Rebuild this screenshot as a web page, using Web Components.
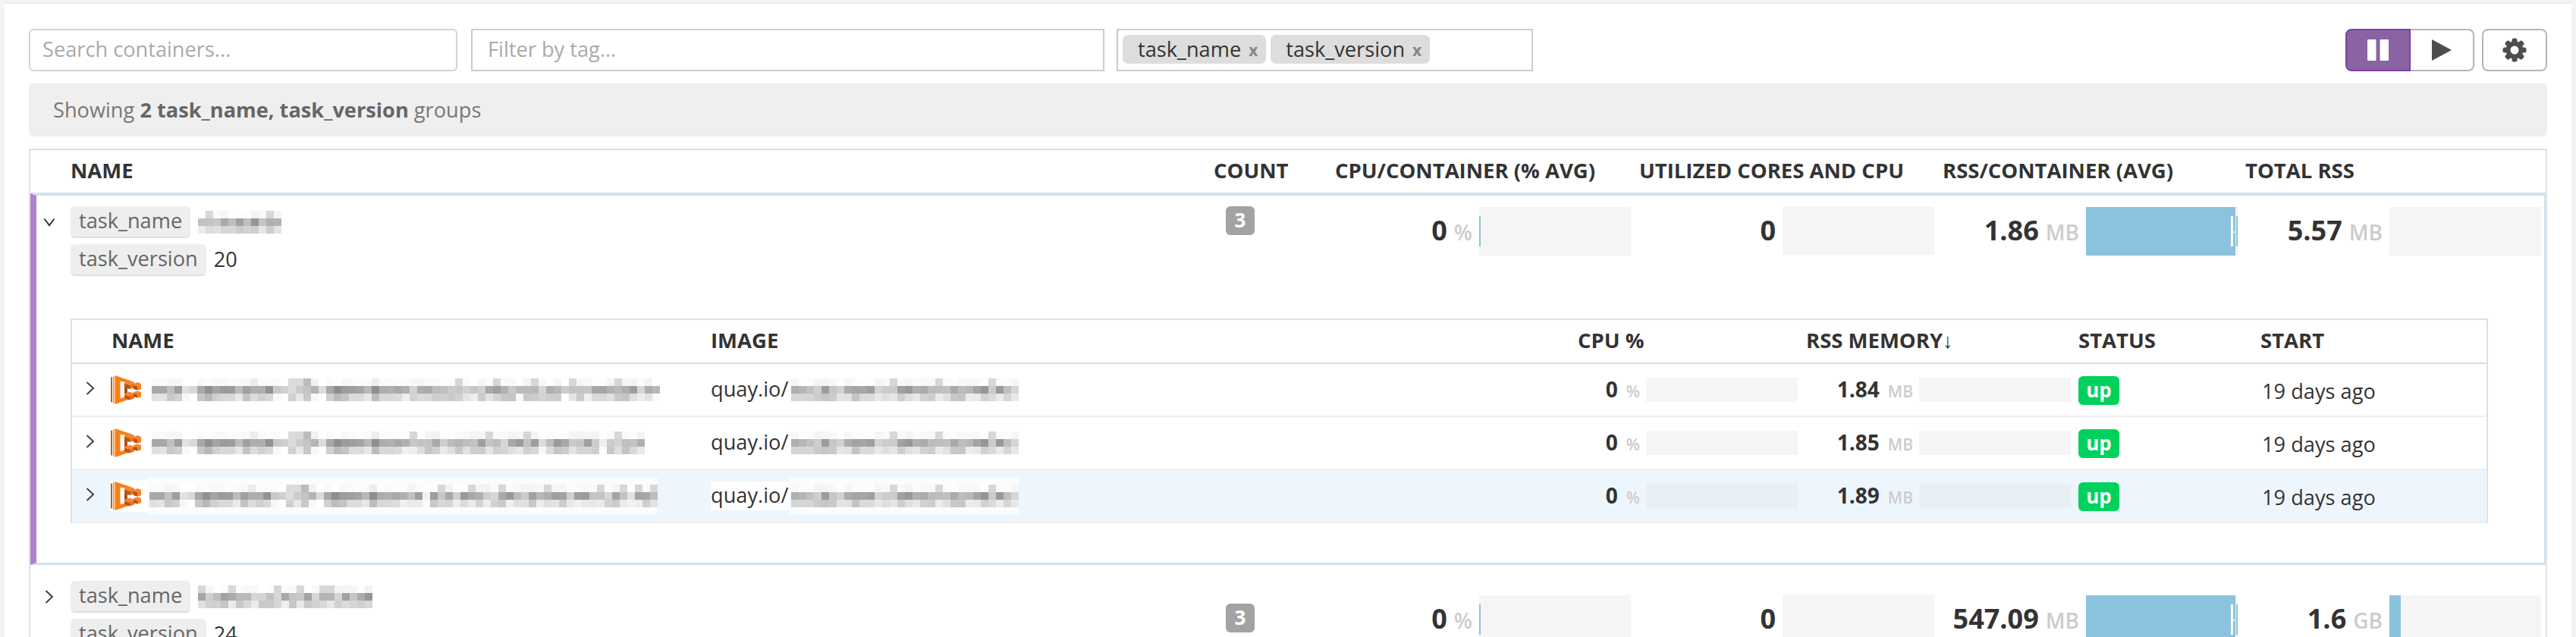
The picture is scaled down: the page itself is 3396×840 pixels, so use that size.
<!DOCTYPE html>
<html lang="en">
<head>
<meta charset="utf-8">
<title>Containers</title>
<style>
html,body{margin:0;padding:0;background:#f4f4f4;}
body{font-family:"Open Sans","Liberation Sans",sans-serif;font-size:27.2px;color:#333;}
</style>
</head>
<body>
<ct-app>
  <ct-toolbar>
    <ct-field style="width:565px" rounded placeholder="Search containers..."></ct-field>
    <ct-field style="width:835px;margin-left:18px;--pad:20px" placeholder="Filter by tag..."></ct-field>
    <ct-tagbox style="margin-left:16px"><ct-pill>task_name</ct-pill><ct-pill>task_version</ct-pill></ct-tagbox>
    <ct-controls></ct-controls>
  </ct-toolbar>
  <ct-summary>Showing <b>2 task_name, task_version</b> groups</ct-summary>
  <ct-table>
    <ct-head></ct-head>
    <ct-group expanded count="3" cpu="0" cores="0" rss="1.86" total="5.57" total-unit="MB" total-fill="0" name-seed="3" name-len="11" version="20">
      <ct-inner>
        <ct-row tail="5"  len="67" image-seed="9" cpu="0" rss="1.84"></ct-row>
        <ct-row tail="17" len="65" image-seed="9" cpu="0" rss="1.85"></ct-row>
        <ct-row tail="31" len="67" image-seed="9" cpu="0" rss="1.89" highlight></ct-row>
      </ct-inner>
    </ct-group>
    <ct-group style="--top:21px" metric-off="18" count-off="30" count="3" cpu="0" cores="0" rss="547.09" total="1.6" total-unit="GB" total-fill="15" name-seed="12" name-len="23" version="24"></ct-group>
  </ct-table>
</ct-app>

<script>
const FONT = '"Open Sans","Liberation Sans",sans-serif';
function el(name, css, html) {
  customElements.define(name, class extends HTMLElement {
    constructor() {
      super();
      this.attachShadow({ mode: 'open' }).innerHTML = '<style>' + css + '</style>' + html;
    }
  });
}
const GRID_OUTER = 'grid-template-columns:1552px 150px 400px 400px 400px 400px 4px;';
const GRID_INNER = 'grid-template-columns:842px 1133px 310px 360px 240px 298px;';

el('ct-app',
  ':host{display:block;margin:4px 6px 0;padding:33px 32px 0;background:#fff;box-sizing:border-box;overflow:hidden;border-top:1px solid #e6e6e6;height:836px;font-family:' + FONT + ';}',
  '<slot></slot>');

el('ct-toolbar', ':host{display:flex;height:56px;}', '<slot></slot>');

customElements.define('ct-field', class extends HTMLElement {
  constructor() {
    super();
    this.attachShadow({ mode: 'open' }).innerHTML = `<style>
      :host{display:flex;align-items:center;box-sizing:border-box;height:56px;border:2px solid #ccc;background:#fff;padding-left:var(--pad,16px);padding-bottom:3px;color:#aaa;font-size:27.2px;}
      :host([rounded]){border-radius:6px;border-color:#d4d4d4;}
    </style><span></span>`;
  }
  connectedCallback() { this.shadowRoot.querySelector('span').textContent = this.getAttribute('placeholder'); }
});

el('ct-tagbox', ':host{display:flex;box-sizing:border-box;width:549px;height:56px;border:2px solid #ccc;padding:6px;gap:6px;background:#fff;}', '<slot></slot>');

el('ct-pill',
  ':host{display:flex;align-items:center;height:38px;box-sizing:border-box;padding:0 11px 2px 20px;background:#ddd;border-radius:7px;color:#333;font-size:27.2px;} i{font-style:normal;font-size:21px;font-weight:700;color:#888;margin-left:10px;padding-top:3px;}',
  '<slot></slot><i>x</i>');

el('ct-controls', `
  :host{display:flex;margin-left:auto;gap:10px;}
  .b{box-sizing:border-box;height:56px;display:flex;align-items:center;justify-content:center;border:2px solid #b5b5b5;background:#fff;}
  .pause{width:86px;background:#8a63a2;border-color:#7d3fa8;border-radius:8px 0 0 8px;}
  .play{width:84px;border-left:0;border-radius:0 8px 8px 0;}
  .gear{width:86px;border-radius:8px;}
  .seg{display:flex;}
  svg{display:block;}
`, `<div class="seg">
  <div class="b pause"><svg width="28" height="28" viewBox="0 0 28 28"><rect x="0" y="0" width="11.500" height="28" rx="1" fill="#fff"/><rect x="16.500" y="0" width="11.500" height="28" rx="1" fill="#fff"/></svg></div>
  <div class="b play"><svg width="26" height="28" viewBox="0 0 26 28"><path d="M0 0 L26 14 L0 28Z" fill="#4d4d4d"/></svg></div>
</div>
<div class="b gear"><svg width="32" height="32" viewBox="-16 -16 32 32"><g fill="#4d4d4d"><circle r="11.500"/>
  <rect x="-3.500" y="-15.500" width="7" height="31" rx="2.500"/>
  <rect x="-3.500" y="-15.500" width="7" height="31" rx="2.500" transform="rotate(45)"/>
  <rect x="-3.500" y="-15.500" width="7" height="31" rx="2.500" transform="rotate(90)"/>
  <rect x="-3.500" y="-15.500" width="7" height="31" rx="2.500" transform="rotate(135)"/></g><circle r="5.500" fill="#fff"/></svg></div>`);

el('ct-summary',
  ':host{display:flex;align-items:center;white-space:pre-wrap;box-sizing:border-box;height:70px;margin-top:16px;padding:0 32px 2px;border-radius:6px;background:#efefef;color:#777;font-size:27.2px;} ::slotted(b){font-weight:700;color:#666;}',
  '<div><slot></slot></div>');

el('ct-table',
  ':host{display:block;margin-top:16px;border:2px solid #e2e2e2;border-top-color:#ddd;border-bottom:0;}',
  '<slot></slot>');

el('ct-head', `
  :host{display:grid;${GRID_OUTER}box-sizing:border-box;height:57px;border-bottom:1px solid #ddd;padding-left:8px;font-size:27.500px;font-weight:700;color:#333;align-items:center;}
  div{white-space:nowrap;padding-bottom:3px;}
  .n{padding-left:45px;}
  .m{padding-left:10px;}
`, `<div class="n">NAME</div><div>COUNT</div><div class="m">CPU/CONTAINER (% AVG)</div><div class="m" style="padding-left:11px">UTILIZED CORES AND CPU</div><div class="m" style="padding-left:11px">RSS/CONTAINER (AVG)</div><div class="m">TOTAL RSS</div>`);

/* pixel strip that stands in for redacted text */
const PREFIX = [
  'fa fa f6 f6 ff ff f8 fc f8 f8 fc fa f8 ec fa fc fa ff dc da bc f2 ff fa fe f8 fa fc fa ee fc fa fc fc',
  'a8 a8 c0 9e e2 d8 a8 90 a4 9a 9c bc a0 ae ae 92 c8 d0 dc cc c4 b4 dc a8 8e 9c 9e a4 b8 8e ac b0 a8 b0',
  'e0 e4 c8 d0 f8 ff c8 b8 d0 d8 d8 e8 c4 dc d0 d8 f8 ff d0 e8 c8 f8 ff d0 bc c4 dc dc e8 bc d8 d8 dc f0'
].map(s => s.split(' '));
function rng(seed) { let s = seed * 2654435761 % 4294967296; return () => (s = (s * 1664525 + 1013904223) % 4294967296) / 4294967296; }
customElements.define('ct-mosaic', class extends HTMLElement {
  constructor() {
    super();
    this.attachShadow({ mode: 'open' }).innerHTML = `<style>
      :host{display:block;flex:none;background:var(--mosaic-bg,transparent);padding:var(--mosaic-pad,0);margin:var(--mosaic-margin,0);}
      svg{display:block;shape-rendering:crispEdges;}
    </style>`;
  }
  connectedCallback() {
    const len = +this.getAttribute('len') || 10;
    const keep = +this.getAttribute('keep') || 0;
    const r = rng(+this.getAttribute('seed') || 1);
    const hex = v => Math.round(v).toString(16).padStart(2, '0');
    let rects = '';
    for (let x = 0; x < len; x++) {
      const gap = r() < .05;
      for (let y = 0; y < 3; y++) {
        let c;
        if (x < keep) c = PREFIX[y][x];
        else {
          const k = r();
          const v = y === 0 ? (k < .18 ? 215 : 240 + k * 15) : y === 1 ? 150 + k * 65 : 195 + k * 45;
          c = hex(gap ? Math.min(255, v + 30) : v);
        }
        rects += `<rect x="${x * 10}" y="${y * 10}" width="10" height="10" fill="#${c}${c}${c}"/>`;
      }
    }
    this.shadowRoot.innerHTML += `<svg width="${len * 10}" height="30" viewBox="0 0 ${len * 10} 30">${rects}</svg>`;
  }
});

customElements.define('ct-chev', class extends HTMLElement {
  constructor() {
    super();
    this.attachShadow({ mode: 'open' }).innerHTML = `<style>:host{display:block;flex:none;line-height:0;}</style>`;
  }
  connectedCallback() {
    this.shadowRoot.innerHTML += this.hasAttribute('down')
      ? `<svg width="16" height="12" viewBox="0 0 16 12"><path d="M1.500 1.500 L8 10 L14.500 1.500" fill="none" stroke="#333" stroke-width="2"/></svg>`
      : `<svg width="12" height="18" viewBox="0 0 12 18"><path d="M1.500 1 L10 9 L1.500 17" fill="none" stroke="#444" stroke-width="2"/></svg>`;
  }
});

el('ct-chip',
  ':host{display:inline-flex;align-items:center;box-sizing:border-box;height:42px;padding:0 11px 3px;background:#eee;border-radius:6px;border-bottom:2px solid #ddd;color:#666;font-size:27.2px;}',
  '<slot></slot>');

customElements.define('ct-metric', class extends HTMLElement {
  constructor() {
    super();
    this.attachShadow({ mode: 'open' }).innerHTML = `<style>
      :host{display:flex;justify-content:flex-end;align-items:center;}
      .v{font-weight:700;font-size:var(--val,36px);color:#333;white-space:nowrap;line-height:var(--bar-h,64px);}
      .u{font-size:var(--unit,28px);font-weight:600;color:#ccc;margin-left:var(--unit-gap,9px);}
      .bar{position:relative;width:var(--bar-w,200px);height:var(--bar-h,64px);margin-left:var(--bar-gap,9px);background:var(--bar-bg,#f5f5f5);flex:none;}
      .fill{height:100%;background:#8bc3de;}
      .t{position:absolute;}
    </style><div class="v"></div><div class="bar"></div>`;
  }
  connectedCallback() {
    const v = this.shadowRoot.querySelector('.v');
    const u = this.getAttribute('unit');
    v.textContent = this.getAttribute('value');
    if (u) { const s = document.createElement('span'); s.className = 'u'; s.textContent = u; v.append(s); }
    const bar = this.shadowRoot.querySelector('.bar');
    const fill = this.getAttribute('fill');
    if (fill) bar.innerHTML += `<div class="fill" style="width:${fill}px"></div>`;
    if (this.hasAttribute('tick')) bar.innerHTML += `<div class="t" style="left:0;top:12px;width:1.500px;height:40px;background:#8bc3de"></div>`;
    if (this.hasAttribute('whisker')) bar.innerHTML += `
      <div class="t" style="left:191px;top:12px;width:2.500px;height:40px;background:#fff"></div>
      <div class="t" style="left:193.500px;top:32px;width:5px;height:2px;background:#d5e8f2"></div>
      <div class="t" style="left:198px;top:12px;width:2px;height:40px;background:#8bc3de"></div>`;
  }
});

customElements.define('ct-group', class extends HTMLElement {
  connectedCallback() {
    if (this.shadowRoot) return;
    const a = n => this.getAttribute(n);
    const exp = this.hasAttribute('expanded');
    const fill = +a('total-fill') ? `fill="${a('total-fill')}"` : '';
    this.attachShadow({ mode: 'open' }).innerHTML = `<style>
      :host{display:block;box-sizing:border-box;border-left:8px solid transparent;border-right:2px solid transparent;}
      :host([expanded]){border:solid #cbe3f0;border-width:3px 2px 3px 8px;border-left-color:#b183cc;}
      .row{display:grid;${GRID_OUTER}align-items:start;padding-top:var(--top,14px);}
      .name{display:flex;}
      .chev{width:45px;box-sizing:border-box;padding:${exp ? '15px 0 0 9px' : '12px 0 0 11px'};}
      .tags{display:flex;flex-direction:column;gap:8px;}
      .tag{display:flex;align-items:center;gap:10px;color:#333;}
      .tag span{padding-bottom:3px;}
      .count{padding-left:16px;margin-top:${a('count-off') || 0}px;}
      .badge{display:flex;align-items:center;justify-content:center;width:38px;height:38px;box-sizing:border-box;padding-bottom:3px;border-radius:6px;background:#a3a3a3;color:#fff;font-weight:700;font-size:26px;}
      ct-metric{margin-top:${a('metric-off') || 0}px;}
      .inner{padding:56px 74px 52px 45px;}
      :host(:not([expanded])) .inner{display:none;}
    </style><div class="row">
      <div class="name"><div class="chev"><ct-chev ${exp ? 'down' : ''}></ct-chev></div><div class="tags">
        <div class="tag"><ct-chip>task_name</ct-chip><ct-mosaic len="${a('name-len')}" seed="${a('name-seed')}"></ct-mosaic></div>
        <div class="tag"><ct-chip>task_version</ct-chip><span>${a('version')}</span></div>
      </div></div>
      <div class="count"><div class="badge">${a('count')}</div></div>
      <ct-metric tick unit="%" value="${a('cpu')}"></ct-metric>
      <ct-metric value="${a('cores')}"></ct-metric>
      <ct-metric whisker unit="MB" fill="197" value="${a('rss')}"></ct-metric>
      <ct-metric unit="${a('total-unit')}" value="${a('total')}" ${fill}></ct-metric>
      <div></div>
    </div><div class="inner"><slot></slot></div>`;
  }
});

el('ct-inner', `
  :host{display:block;border:solid #e0e0e0;border-width:2px 2px 0;}
  .h{display:grid;${GRID_INNER}height:58px;box-sizing:border-box;align-items:center;border-bottom:2px solid #ddd;font-size:27.500px;font-weight:700;color:#333;}
  .h div{padding-bottom:3px;white-space:nowrap;}
`, `<div class="h"><div style="padding-left:52px">NAME</div><div>IMAGE</div><div style="padding-left:10px">CPU %</div><div style="padding-left:1px">RSS MEMORY↓</div><div>STATUS</div><div>START</div></div><slot></slot>`);

el('ct-ecs', ':host{display:block;flex:none;line-height:0;}', `<svg width="40" height="38" viewBox="0 0 40 38">
  <path d="M0 3 L2 2 V36 L0 35Z" fill="#c9600f"/>
  <path d="M3 1.500 L4.500 1 V37 L3 36.500Z" fill="#f58534"/>
  <path d="M5.500 0 L26 7 V10 L18 8.500 L12.500 8 V30 L18 29 L26 28 V31 L5.500 38Z" fill="#f97f16"/>
  <path d="M18 14 H22 V25 H18Z" fill="#a8500f"/>
  <path d="M18 9 L25 6.500 L31 9 L31 16 L25 18 L18 15.500Z" fill="#f58534"/>
  <path d="M18 11 L25 13 V18 L18 15.500Z" fill="#b5540f"/>
  <path d="M25 13 L31 11 V16 L25 18Z" fill="#e8701a"/>
  <path d="M30 11 L35.500 9 L40 11 V18 L35.500 19.500 L30 18Z" fill="#f58534"/>
  <path d="M30 13 L35 14.500 V19.500 L30 18Z" fill="#b5540f"/>
  <path d="M35 14.500 L40 13 V18 L35 19.500Z" fill="#f28022"/>
  <path d="M18 24 L25 21.500 L31 24 L31 30 L25 32.500 L18 30Z" fill="#f58534"/>
  <path d="M18 26 L25 28 V32.500 L18 30Z" fill="#b5540f"/>
  <path d="M25 28 L31 26 V30 L25 32.500Z" fill="#e8701a"/>
  <path d="M30 22 L35.500 20.500 L40 22 V28 L35.500 29.500 L30 28Z" fill="#f58534"/>
  <path d="M30 24 L35 25.500 V29.500 L30 28Z" fill="#b5540f"/>
  <path d="M35 25.500 L40 24 V28 L35 29.500Z" fill="#f28022"/>
</svg>`);

customElements.define('ct-row', class extends HTMLElement {
  connectedCallback() {
    if (this.shadowRoot) return;
    const a = n => this.getAttribute(n);
    this.attachShadow({ mode: 'open' }).innerHTML = `<style>
      :host{display:grid;${GRID_INNER}align-items:center;height:70px;box-sizing:border-box;border-bottom:2px solid #eee;font-size:27.2px;color:#333;--val:28px;--unit:21px;--bar-h:32px;--unit-gap:11px;--bar-gap:8px;}
      :host([highlight]){background:#eef6fd;--bar-bg:#e8f0f3;--mosaic-bg:#fafcfe;--mosaic-pad:9px 0 9px 3px;--mosaic-margin:-9px 0 -9px -3px;}
      .name{display:flex;align-items:center;padding-left:18px;height:68px;}
      .icw{margin-left:21px;padding-right:14px;}
      :host([highlight]) .icw{background:#fff;padding:2px 11px 2px 0;}
      ct-chev{margin-top:-4px;}
      .image{display:flex;align-items:center;}
      .q{padding:3px 4px 5px 0;line-height:30px;}
      :host([highlight]) .q{background:#fff;}
      .pr{padding-right:10px;}
      .up{display:flex;align-items:center;justify-content:center;width:54px;height:38px;box-sizing:border-box;padding-bottom:3px;background:#00d15c;border-radius:6px;color:#fff;font-weight:700;font-size:26px;margin-top:2px;}
      .s{padding:0 0 0 2px;margin-top:2px;}
    </style>
    <div class="name"><ct-chev></ct-chev><div class="icw"><ct-ecs></ct-ecs></div><ct-mosaic keep="34" len="${a('len')}" seed="${a('tail')}"></ct-mosaic></div>
    <div class="image"><span class="q">quay.io/</span><ct-mosaic len="30" seed="${a('image-seed')}"></ct-mosaic></div>
    <ct-metric class="pr" unit="%" value="${a('cpu')}"></ct-metric>
    <ct-metric class="pr" unit="MB" value="${a('rss')}"></ct-metric>
    <div><div class="up">up</div></div>
    <div class="s">19 days ago</div>`;
  }
});
</script>
</body>
</html>
